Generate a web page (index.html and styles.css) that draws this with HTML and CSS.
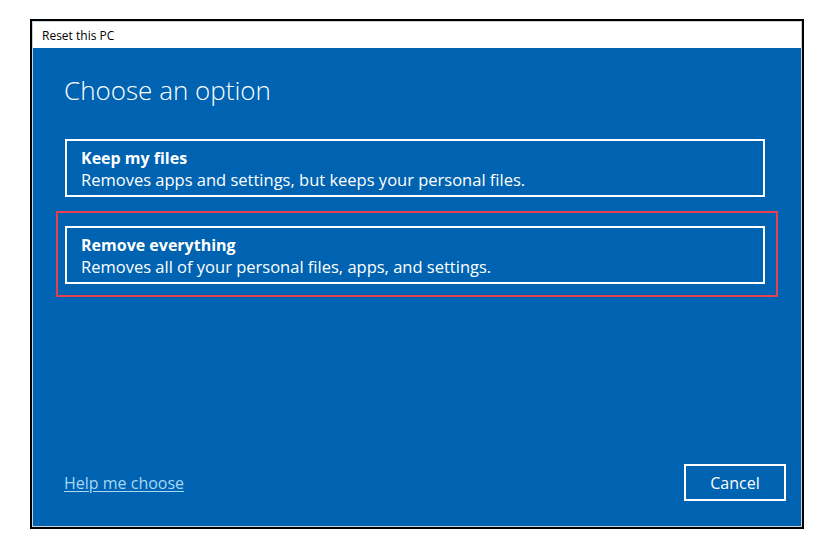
FILE: index.html
```html
<!DOCTYPE html>
<html>
<head>
<meta charset="utf-8">
<link rel="stylesheet" href="styles.css">
</head>
<body>
<div class="window">
  <div class="frame">
    <div class="titlebar">Reset this PC</div>
    <div class="content">
      <h1 class="heading">Choose an option</h1>
      <div class="options">
        <div class="option">
          <div class="option-title">Keep my files</div>
          <div class="option-desc">Removes apps and settings, but keeps your personal files.</div>
        </div>
        <div class="option option-marked">
          <div class="option-title">Remove everything</div>
          <div class="option-desc">Removes all of your personal files, apps, and settings.</div>
          <div class="highlight"></div>
        </div>
      </div>
      <div class="footer">
        <a class="help" href="#">Help me choose</a>
        <button class="cancel">Cancel</button>
      </div>
    </div>
  </div>
</div>
</body>
</html>
```
FILE: styles.css
```css
html, body {
  margin: 0;
  padding: 0;
  background: #ffffff;
}
body {
  padding: 19px 0 0 30px;
  font-family: "Open Sans", "Noto Sans", sans-serif;
}
.window {
  width: 770px;
  height: 506px;
  border: 2px solid #000;
  background: #fff;
}
.frame {
  height: 100%;
  box-sizing: border-box;
  border: 1px solid #c9d3dc;
  display: flex;
  flex-direction: column;
}
.titlebar {
  height: 26px;
  display: flex;
  align-items: center;
  padding-left: 9px;
  font-size: 12px;
  color: #000;
  background: #fff;
  flex: none;
}
.content {
  flex: 1;
  background: #0063b1;
  display: flex;
  flex-direction: column;
  padding: 0 15px 0 31px;
  color: #fff;
}
.heading {
  margin: 24px 0 0 0;
  font-weight: 300;
  font-size: 26px;
  line-height: 36px;
  color: #fff;
}
.options {
  margin-top: 31px;
  display: flex;
  flex-direction: column;
  gap: 29px;
  width: 700px;
  margin-left: 1px;
}
.option {
  position: relative;
  border: 2px solid #fff;
  height: 58px;
  box-sizing: border-box;
  padding: 6px 14px 0 14px;
}
.option-title {
  font-weight: 700;
  font-size: 16px;
  line-height: 22px;
}
.option-desc {
  font-size: 16.5px;
  line-height: 22px;
}
.highlight {
  position: absolute;
  left: -11px;
  top: -17px;
  right: -15px;
  bottom: -15px;
  border: 2px solid #e5404f;
  pointer-events: none;
}
.footer {
  margin-top: auto;
  margin-bottom: 25px;
  display: flex;
  justify-content: space-between;
  align-items: center;
}
.help {
  color: #a6d8f7;
  font-size: 16px;
  text-decoration: underline;
  text-underline-offset: 2px;
}
.cancel {
  width: 102px;
  height: 37px;
  border: 2px solid #fff;
  background: #0063b1;
  color: #fff;
  font-family: "Open Sans", "Noto Sans", sans-serif;
  font-size: 16px;
  padding: 0;
}
```
